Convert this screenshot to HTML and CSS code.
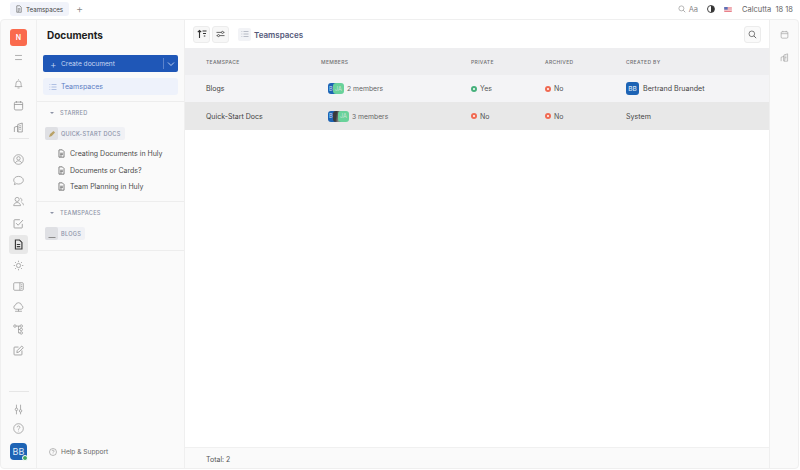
FILE: index.html
```html
<!DOCTYPE html>
<html lang="en">
<head>
<meta charset="utf-8">
<title>Teamspaces</title>
<link rel="stylesheet" href="styles.css">
</head>
<body>
<svg class="defs" width="0" height="0">
  <symbol id="doc" viewBox="0 0 16 16"><path d="M4 1.500h5.500L12.500 4.500V14.500H3.500V2a.5.5 0 0 1 .5-.5zM5.500 7.500h5M5.500 10h5M5.500 12.500h3" fill="none" stroke="currentColor" stroke-width="1.300"/></symbol>
  <symbol id="list" viewBox="0 0 16 16"><path d="M1 3h1.500M5 3h10M1 8h1.500M5 8h10M1 13h1.500M5 13h10" fill="none" stroke="currentColor" stroke-width="1.100"/></symbol>
  <symbol id="help" viewBox="0 0 16 16"><circle cx="8" cy="8" r="7" fill="none" stroke="currentColor" stroke-width="1"/><path d="M6 6.300a2 2 0 1 1 3 1.700c-.7.4-1 .8-1 1.600M8 11.200v1" fill="none" stroke="currentColor" stroke-width="1"/></symbol>
  <symbol id="search" viewBox="0 0 16 16"><circle cx="6.800" cy="6.800" r="5" fill="none" stroke="currentColor" stroke-width="1.200"/><path d="M10.500 10.500l4 4" stroke="currentColor" stroke-width="1.400"/></symbol>
  <symbol id="cal" viewBox="0 0 16 16"><rect x="2" y="3" width="12" height="11.500" rx="2" fill="none" stroke="currentColor" stroke-width="1.100"/><path d="M2 6.500h12M5 1.500v2.500M11 1.500v2.500" stroke="currentColor" stroke-width="1.100"/></symbol>
  <symbol id="bldg" viewBox="0 0 16 16"><path d="M2 14.500V7.500L7 6V14.500M7 14.500V3.500L13.500 1.500V14.500ZM9 5.500h2.500M9 8h2.500M9 10.500h2.500" fill="none" stroke="currentColor" stroke-width="1.100"/></symbol>
</svg>

<header class="topbar">
  <div class="tab">
    <svg class="ic-10"><use href="#doc"/></svg>
    <span>Teamspaces</span>
  </div>
  <span class="tab-add">+</span>
  <div class="top-tools">
    <svg class="ic-11"><use href="#search"/></svg>
    <span class="aa">Aa</span>
    <span class="contrast"></span>
    <svg class="flag" viewBox="0 0 12 8"><rect width="12" height="8" fill="#e8808a"/><path d="M0 1.500h12M0 3.500h12M0 5.500h12" stroke="#fff" stroke-width=".9"/><rect width="5.500" height="4.200" fill="#5a70b8"/></svg>
    <span class="clock">Calcutta&nbsp; 18 18</span>
  </div>
</header>

<div class="shell">
  <nav class="rail">
    <div class="logo">N</div>
    <svg class="ic rail-menu" viewBox="0 0 16 16"><path d="M3 5h10M3 11h10" stroke="currentColor" stroke-width="1"/></svg>
    <div class="rail-group rail-group-a">
      <svg class="ic" viewBox="0 0 16 16"><path d="M3 12.500c1-1 1.300-2 1.300-4.500a3.700 3.700 0 0 1 7.400 0c0 2.500.3 3.500 1.300 4.500zM6.500 14.500h3M8 2.500V1.500" fill="none" stroke="currentColor" stroke-width="1"/></svg>
      <svg class="ic"><use href="#cal"/></svg>
      <svg class="ic"><use href="#bldg"/></svg>
    </div>
    <div class="rail-rule"></div>
    <div class="rail-group">
      <svg class="ic" viewBox="0 0 16 16"><circle cx="8" cy="8" r="7" fill="none" stroke="currentColor" stroke-width="1"/><circle cx="8" cy="6.300" r="2.500" fill="none" stroke="currentColor" stroke-width="1"/><path d="M3.500 12.800c1-2 2.500-2.800 4.500-2.800s3.500.8 4.500 2.800" fill="none" stroke="currentColor" stroke-width="1"/></svg>
      <svg class="ic" viewBox="0 0 16 16"><path d="M8 2c3.900 0 7 2.500 7 5.600s-3.100 5.600-7 5.600c-1 0-2-.2-2.900-.5L2 14l.8-3C1.700 10 1 8.900 1 7.600 1 4.500 4.100 2 8 2z" fill="none" stroke="currentColor" stroke-width="1"/></svg>
      <svg class="ic" viewBox="0 0 16 16"><circle cx="6" cy="5" r="3" fill="none" stroke="currentColor" stroke-width="1"/><path d="M1 14c.5-3 2.300-4.500 5-4.500s4.500 1.500 5 4.500zM10.500 3a3 3 0 0 1 1.500 5M12.500 9.500c1.500.5 2.500 2 2.800 4" fill="none" stroke="currentColor" stroke-width="1"/></svg>
      <svg class="ic" viewBox="0 0 16 16"><path d="M13.500 8.500v5a1 1 0 0 1-1 1h-10a1 1 0 0 1-1-1v-10a1 1 0 0 1 1-1H10M4.500 7.500l3 3L14.500 3" fill="none" stroke="currentColor" stroke-width="1.100"/></svg>
      <div class="rail-active"><svg class="ic" viewBox="0 0 16 16"><path d="M3.500 1.500h6l3.500 3.500v9.500H3.500zM5.500 8h5M5.500 11h5" fill="none" stroke="currentColor" stroke-width="1.700"/></svg></div>
      <svg class="ic" viewBox="0 0 16 16"><circle cx="8" cy="8" r="3" fill="none" stroke="currentColor" stroke-width="1"/><path d="M8 1v2M8 13v2M1 8h2M13 8h2M3 3l1.500 1.500M11.500 11.500L13 13M13 3l-1.500 1.500M4.500 11.500L3 13" stroke="currentColor" stroke-width="1"/></svg>
      <svg class="ic" viewBox="0 0 16 16"><rect x="1" y="2.500" width="14" height="11" rx="1.500" fill="none" stroke="currentColor" stroke-width="1"/><path d="M10 2.500v11M11.500 5.500h2M11.500 8h2M11.500 10.500h2" stroke="currentColor" stroke-width="1"/></svg>
      <svg class="ic" viewBox="0 0 16 16"><path d="M4 10.500a3 3 0 0 1-.5-5.900A4.600 4.600 0 0 1 12.500 4.800a3 3 0 0 1-.5 5.700zM8 10.500v3M3 13.500h10" fill="none" stroke="currentColor" stroke-width="1"/></svg>
      <svg class="ic" viewBox="0 0 16 16"><circle cx="2.800" cy="3" r="1.800" fill="none" stroke="currentColor" stroke-width="1"/><circle cx="12" cy="3" r="1.800" fill="none" stroke="currentColor" stroke-width="1"/><circle cx="12" cy="8" r="1.800" fill="none" stroke="currentColor" stroke-width="1"/><circle cx="12" cy="13" r="1.800" fill="none" stroke="currentColor" stroke-width="1"/><path d="M4.600 3h5.600M8 3v10h2.200M8 8h2.200" fill="none" stroke="currentColor" stroke-width="1"/></svg>
      <svg class="ic" viewBox="0 0 16 16"><path d="M8 3H2.500a1 1 0 0 0-1 1v9.500a1 1 0 0 0 1 1H12a1 1 0 0 0 1-1V8M5.500 11l.7-3L12.700 1.500 15 3.800 8.500 10.300z" fill="none" stroke="currentColor" stroke-width="1.100"/></svg>
    </div>
    <div class="rail-foot">
      <div class="rail-rule"></div>
      <svg class="ic foot-sliders" viewBox="0 0 16 16"><path d="M5 1v5M5 9.500V15M11 1v7M11 12v3" stroke="currentColor" stroke-width="1"/><circle cx="5" cy="7.800" r="1.800" fill="none" stroke="currentColor" stroke-width="1"/><circle cx="11" cy="10" r="1.800" fill="none" stroke="currentColor" stroke-width="1"/></svg>
      <svg class="ic foot-help"><use href="#help"/></svg>
      <div class="me">BB<span class="me-dot"></span></div>
    </div>
  </nav>

  <aside class="nav">
    <h1 class="nav-title">Documents</h1>
    <div class="create">
      <span class="create-main"><span class="create-plus">+</span>Create document</span>
      <span class="create-more"><svg width="8" height="6" viewBox="0 0 8 6"><path d="M1 1.500l3 3 3-3" fill="none" stroke="#dfe7f7" stroke-width=".8"/></svg></span>
    </div>
    <div class="nav-current">
      <svg class="ic-10"><use href="#list"/></svg>
      <span>Teamspaces</span>
    </div>
    <section class="nav-sec sec-top">
      <div class="sec-head"><span class="tri"></span>STARRED</div>
      <div class="chip">
        <span class="chip-ic"><svg width="8" height="8" viewBox="0 0 8 8"><path d="M1 7l1-3 3.500-3 1.500 1.500L3.800 6z" fill="#b9a267"/></svg></span>
        <span>QUICK-START DOCS</span>
      </div>
      <ul class="docs">
        <li><svg class="ic-10"><use href="#doc"/></svg>Creating Documents in Huly</li>
        <li><svg class="ic-10"><use href="#doc"/></svg>Documents or Cards?</li>
        <li><svg class="ic-10"><use href="#doc"/></svg>Team Planning in Huly</li>
      </ul>
    </section>
    <section class="nav-sec sec-last">
      <div class="sec-head"><span class="tri"></span>TEAMSPACES</div>
      <div class="chip">
        <span class="chip-ic"><svg width="8" height="8" viewBox="0 0 8 8"><path d="M.5 7.500h7" stroke="#8b8b8b" stroke-width="1"/></svg></span>
        <span>BLOGS</span>
      </div>
    </section>
    <div class="nav-help">
      <svg class="ic-help"><use href="#help"/></svg>
      <span>Help &amp; Support</span>
    </div>
  </aside>

  <main class="main">
    <div class="bar">
      <span class="sq-btn"><svg width="10" height="10" viewBox="0 0 10 10"><path d="M2.500 9V1.500M.8 3.200L2.500 1.500 4.200 3.200" fill="none" stroke="#333" stroke-width="1.100"/><path d="M5.500 2h4M6 4.500h3M6.800 7h1.500" stroke="#333" stroke-width="1.200"/></svg></span>
      <span class="sq-btn"><svg width="9" height="8" viewBox="0 0 11 10"><path d="M.5 3h6M9.500 3h1M.5 7h1M4.500 7h6" stroke="#444" stroke-width="1"/><circle cx="8" cy="3" r="1.300" fill="none" stroke="#444"/><circle cx="3" cy="7" r="1.300" fill="none" stroke="#444"/></svg></span>
      <span class="bar-ic"><svg class="ic-10"><use href="#list"/></svg></span>
      <span class="bar-title">Teamspaces</span>
      <span class="sq-btn bar-search"><svg width="9" height="9"><use href="#search"/></svg></span>
    </div>
    <div class="table">
      <div class="row head">
        <span>TEAMSPACE</span><span>MEMBERS</span><span>PRIVATE</span><span>ARCHIVED</span><span>CREATED BY</span>
      </div>
      <div class="row">
        <span class="name">Blogs</span>
        <span class="members"><span class="stack"><span class="av av-b">B</span><span class="av av-j">JA</span></span>2 members</span>
        <span class="flagcell"><i class="dot ok"></i>Yes</span>
        <span class="flagcell"><i class="dot no"></i>No</span>
        <span class="creator"><span class="av-bb">BB</span>Bertrand Bruandet</span>
      </div>
      <div class="row sel">
        <span class="name">Quick-Start Docs</span>
        <span class="members"><span class="stack"><span class="av av-b">B</span><span class="av av-p"></span><span class="av av-j">JA</span></span>3 members</span>
        <span class="flagcell"><i class="dot no"></i>No</span>
        <span class="flagcell"><i class="dot no"></i>No</span>
        <span class="creator">System</span>
      </div>
    </div>
    <div class="total">Total: 2</div>
  </main>

  <aside class="side">
    <svg class="ic-side"><use href="#cal"/></svg>
    <svg class="ic-side"><use href="#bldg"/></svg>
  </aside>
</div>
</body>
</html>
```

FILE: styles.css
```css
* { box-sizing: border-box; }
html, body { margin: 0; height: 100%; }
body {
  width: 800px; height: 470px; overflow: hidden;
  background: #fff; color: #3c3c3c;
  font-family: Inter, "Liberation Sans", sans-serif;
  font-size: 8px;
  display: flex; flex-direction: column;
}
.defs { position: absolute; }
.topbar { height: 19px; flex: none; display: flex; align-items: center; padding: 0 7px 0 10px; }
.tab { width: 59px; height: 14px; margin-top: -1px; display: flex; align-items: center; gap: 3px; padding-left: 5px; background: #f1f3fa; border-radius: 3px; font-size: 6.200px; color: #444; }
.ic-10 { width: 8px; height: 8px; flex: none; color: #666; }
.tab-add { margin-left: 7px; margin-top: -1px; font-size: 11px; color: #888; font-weight: 300; }
.top-tools { margin-left: auto; display: flex; align-items: center; color: #777; font-size: 7.500px; margin-top: -1px; }
.ic-11 { width: 8px; height: 8px; color: #8a8a8a; }
.aa { margin-left: 3px; color: #888; }
.contrast { width: 8px; height: 8px; margin-left: 9px; border-radius: 50%; border: 1px solid #444; background: linear-gradient(90deg, #fff 50%, #333 50%); }
.flag { width: 8px; height: 5px; margin-left: 9px; }
.clock { margin-left: 10px; color: #666; }

.shell { flex: 1; min-height: 0; display: flex; margin: 0 1px 1px 0; border: 1px solid #efefef; border-radius: 4px; background: #fafafa; overflow: hidden; }

.rail { width: 36px; flex: none; display: flex; flex-direction: column; align-items: center; padding-top: 9px; color: #8d8d8d; border-right: 1px solid #efefef; }
.logo { width: 17px; height: 17px; border-radius: 3px; background: #fa6a4d; color: #fff; display: flex; align-items: center; justify-content: center; font-size: 7px; font-weight: 600; }
.ic { width: 11px; height: 11px; flex: none; color: #8d8d8d; }
.rail-menu { margin-top: 6px; }
.rail-group { display: flex; flex-direction: column; align-items: center; gap: 10.200px; }
.rail-group-a { margin-top: 15px; gap: 11px; }
.rail-rule { width: 20px; height: 1px; background: #e6e6e6; flex: none; }
.rail > .rail-rule { margin: 5px 0 15px; }
.rail-active { width: 19px; height: 19px; margin: -4px 0; border-radius: 3px; background: #e8e8e8; display: flex; align-items: center; justify-content: center; }
.rail-active .ic { color: #3a3a3a; }
.rail-foot { margin-top: auto; display: flex; flex-direction: column; align-items: center; }
.foot-sliders { margin-top: 12px; }
.foot-help { margin-top: 8px; }
.me { position: relative; width: 17px; height: 17px; margin: 9px 0 8px; border-radius: 4px; background: #1d63b4; color: #dfe9f6; font-size: 9px; display: flex; align-items: center; justify-content: center; }
.me-dot { position: absolute; right: -1px; bottom: -1px; width: 6px; height: 6px; border-radius: 50%; background: #3fa45f; border: 1px solid #fff; }

.nav { width: 148px; flex: none; display: flex; flex-direction: column; border-right: 1px solid #efefef; }
.nav-title { margin: 9px 0 0 10px; height: 12px; line-height: 12px; font-size: 10px; font-weight: 700; color: #1d1d1d; }
.create { margin: 14px 6px 0; height: 17px; display: flex; background: #1f57b7; border-radius: 2px; color: #c9d8f2; font-size: 6.600px; }
.create-main { flex: 1; display: flex; align-items: center; padding-left: 7px; }
.create-plus { font-size: 10px; font-weight: 300; width: 11px; }
.create-more { width: 15px; margin: 3px 0; display: flex; align-items: center; justify-content: center; border-left: 1px solid #5b83cc; }
.nav-current { margin: 6px 6px 0; height: 17px; display: flex; align-items: center; gap: 4px; padding-left: 6px; background: #eef2fb; border-radius: 3px; color: #5b7cc4; font-size: 7px; }
.nav-current .ic-10 { color: #7c97cf; }
.nav-sec { border-top: 1px solid #ededed; padding-bottom: 6px; }
.sec-top { margin-top: 6px; }
.sec-last { padding-bottom: 10px; border-bottom: 1px solid #ededed; }
.sec-head { margin-top: 6px; height: 10px; padding-left: 13px; display: flex; align-items: center; gap: 6px; font-size: 5.600px; letter-spacing: .3px; font-weight: 500; color: #8d93a6; }
.tri { width: 0; height: 0; border: 2px solid transparent; border-top: 2.500px solid #8d93a6; border-bottom: 0; }
.chip { margin: 9px 0 0 8px; width: max-content; height: 13px; display: flex; align-items: center; gap: 3px; padding-right: 4px; background: #f0f1f5; border-radius: 2px; font-size: 5.600px; font-weight: 500; letter-spacing: .25px; color: #8b91a8; }
.chip-ic { width: 13px; height: 13px; display: flex; align-items: center; justify-content: center; background: #dfe0e4; border-radius: 2px; }
.docs { list-style: none; margin: 5px 0 0; padding: 0; }
.docs li { height: 16.800px; display: flex; align-items: center; gap: 4px; padding-left: 20px; font-size: 7px; color: #4a4a4a; }
.docs .ic-10 { width: 9px; height: 9px; color: #555; }
.nav-help { margin-top: auto; height: 28px; display: flex; align-items: flex-start; gap: 4px; padding: 7px 0 0 12px; color: #666; font-size: 6.600px; line-height: 10px; }
.ic-help { width: 8px; height: 8px; margin-top: 1px; color: #7a7a7a; }

.main { flex: 1; min-width: 0; display: flex; flex-direction: column; background: #fff; }
.bar { height: 28px; flex: none; display: flex; align-items: center; padding: 0 8px; }
.sq-btn { width: 17px; height: 17px; margin-right: 2px; display: flex; align-items: center; justify-content: center; background: #f7f7f7; border: 1px solid #ececec; border-radius: 3px; color: #444; }
.bar-ic { width: 13px; height: 13px; margin-left: 7px; display: flex; align-items: center; justify-content: center; background: #f2f3f6; border-radius: 2px; }
.bar-ic .ic-10 { color: #8a90a0; }
.bar-title { margin: 1px 0 0 3px; font-size: 8px; font-weight: 600; color: #53597a; }
.bar-search { margin: 0 0 0 auto; background: #fafafa; }
.table { flex: 1; }
.row { display: grid; grid-template-columns: 115px 150px 74px 81px 1fr; align-items: center; padding-left: 21px; height: 27px; font-size: 7px; color: #444; background: #f4f4f6; }
.row.head { background: #eeeef0; font-size: 5px; font-weight: 500; letter-spacing: .35px; color: #6e6e72; }
.row.sel { height: 28px; background: #e8e8e8; }
.name { font-size: 7px; color: #3f3f3f; }
.members { display: flex; align-items: center; gap: 3px; padding-left: 7px; font-size: 6.800px; color: #666; }
.stack { display: flex; }
.av { width: 11px; height: 11px; border-radius: 3px; display: flex; align-items: center; justify-content: center; font-size: 5.500px; color: #cfe5da; overflow: hidden; flex: none; }
.av + .av { margin-left: -6px; }
.av-b { background: #1d63b4; justify-content: flex-start; padding-left: 1px; color: #cfdcee; }
.av-j { background: #69d29a; }
.av-p { background: linear-gradient(100deg, #3a3a3a 30%, #8e8e8e 55%, #555 80%); }
.flagcell { display: flex; align-items: center; gap: 3px; font-size: 7px; color: #555; }
.dot { position: relative; width: 6px; height: 6px; border-radius: 50%; }
.dot::after { content: ""; position: absolute; left: 2px; top: 2px; width: 2px; height: 2px; border-radius: 50%; background: #fff; }
.dot.ok { background: #46b07b; }
.dot.no { background: #f06a52; }
.creator { display: flex; align-items: center; gap: 4px; font-size: 7.100px; color: #444; }
.av-bb { width: 13px; height: 13px; border-radius: 3px; background: #1d63b4; color: #d6e4f4; display: flex; align-items: center; justify-content: center; font-size: 6.500px; font-weight: 500; }
.total { height: 21px; flex: none; display: flex; align-items: center; padding: 2px 0 0 21px; border-top: 1px solid #f0f0f0; background: #fafafa; font-size: 7px; color: #555; }

.side { width: 29px; flex: none; display: flex; flex-direction: column; align-items: center; gap: 14px; padding-top: 10px; border-left: 1px solid #efefef; }
.ic-side { width: 9px; height: 9px; color: #9a9a9a; }
```
